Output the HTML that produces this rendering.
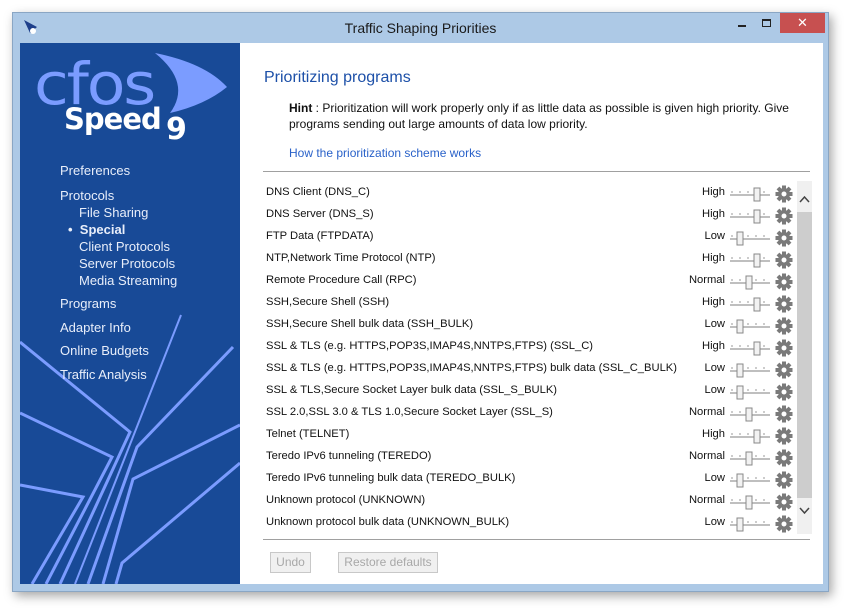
<!DOCTYPE html>
<html><head><meta charset="utf-8"><style>
body{margin:0;width:852px;height:612px;background:#fff;position:relative;overflow:hidden;font-family:"Liberation Sans",sans-serif;}
.win{position:absolute;left:12px;top:12px;width:817px;height:580px;background:#adc9e6;border:1px solid #8aa6c4;box-sizing:border-box;box-shadow:3px 4px 10px rgba(0,0,0,.35);}
.title{position:absolute;left:0;top:0;width:100%;text-align:center;top:7px;font-size:14px;color:#1a1a1a;}
.close{position:absolute;left:767px;top:0;width:45px;height:20px;background:#c75050;color:#fff;text-align:center;font-size:13px;line-height:20px;}
.side{position:absolute;left:20px;top:43px;width:220px;height:541px;background:#184a97;overflow:hidden;}
.main{position:absolute;left:240px;top:43px;width:583px;height:541px;background:#fff;}
.nav{position:absolute;color:#e8eefa;font-size:13px;}
.row{position:absolute;left:266px;font-size:11.2px;color:#111;}
.pr{position:absolute;font-size:11.2px;color:#111;text-align:right;width:60px;}
.btn{position:absolute;top:552px;height:19px;border:1px solid #c8c8c8;background:#f0f0f0;color:#a8a8a8;font-size:12px;line-height:19px;text-align:center;}
</style></head><body>
<div class="win">
<div class="title">Traffic Shaping Priorities</div>
<div style="position:absolute;left:725px;top:12px;width:8px;height:2px;background:#222"></div>
<div style="position:absolute;left:749px;top:6px;width:7px;height:5px;border:1.5px solid #222;border-top-width:2.5px"></div>
<div class="close">✕</div>
<svg style="position:absolute;left:10px;top:6px" width="16" height="16"><path d="M1 1 L14 8 L7 14 Z" fill="#1e3f8a"/><circle cx="10" cy="12" r="3" fill="#fff"/></svg>
</div>
<div class="side">
<svg width="220" height="541" style="position:absolute;left:0;top:0">
<g fill="none" stroke="#7b9cff" stroke-width="3">
<polyline points="0,442 63,454 12,541"/>
<polyline points="0,370 92,414 26,541"/>
<polyline points="0,299 110,389 40,541"/>
<polyline points="161,272 55,541" stroke-width="2"/>
<polyline points="213,304 117,404 68,541"/>
<polyline points="220,382 113,436 83,541"/>
<polyline points="220,420 102,520 96,541"/>
</g>
<path d="M135 10 Q185 20 207 44 Q185 62 150 70 Q172 40 135 10Z" fill="#7b9cff"/>
<text x="14" y="61" font-family="DejaVu Sans" font-size="58" fill="#7b9cff" letter-spacing="-2" textLength="120" lengthAdjust="spacingAndGlyphs">cfos</text>
<text x="44" y="86" font-family="DejaVu Sans" font-weight="bold" font-size="29" fill="#fff" letter-spacing="-1">Speed</text>
<text x="146" y="96" font-family="DejaVu Sans" font-weight="bold" font-size="30" fill="#fff">9</text>
</svg>
<div class="nav" style="left:40px;top:120px">Preferences</div>
<div class="nav" style="left:40px;top:145px">Protocols</div>
<div class="nav" style="left:59px;top:162px">File Sharing</div>
<div class="nav" style="left:48px;top:179px;font-weight:bold">•&nbsp; Special</div>
<div class="nav" style="left:59px;top:196px">Client Protocols</div>
<div class="nav" style="left:59px;top:213px">Server Protocols</div>
<div class="nav" style="left:59px;top:230px">Media Streaming</div>
<div class="nav" style="left:40px;top:253px">Programs</div>
<div class="nav" style="left:40px;top:277px">Adapter Info</div>
<div class="nav" style="left:40px;top:300px">Online Budgets</div>
<div class="nav" style="left:40px;top:324px">Traffic Analysis</div>
</div>
<div class="main"></div>
<div style="position:absolute;left:264px;top:69px;font-size:16px;color:#1d50a8">Prioritizing programs</div>
<div style="position:absolute;left:289px;top:100px;width:510px;font-size:12px;line-height:16px;color:#111"><b>Hint</b> : Prioritization will work properly only if as little data as possible is given high priority. Give programs sending out large amounts of data low priority.</div>
<div style="position:absolute;left:289px;top:146px;font-size:12px;color:#2a62c9">How the prioritization scheme works</div>
<div style="position:absolute;left:263px;top:171px;width:547px;height:1px;background:#a0a0a0"></div>
<div style="position:absolute;left:263px;top:539px;width:547px;height:1px;background:#a0a0a0"></div>
<div style="position:absolute;left:797px;top:181px;width:15px;height:353px;background:#f0f0f0"></div>
<div style="position:absolute;left:797px;top:212px;width:15px;height:286px;background:#cdcdcd"></div>
<svg style="position:absolute;left:797px;top:194px" width="15" height="12"><polyline points="3,8 7.5,3 12,8" fill="none" stroke="#444" stroke-width="1.5"/></svg>
<svg style="position:absolute;left:797px;top:505px" width="15" height="12"><polyline points="3,3 7.5,8 12,3" fill="none" stroke="#444" stroke-width="1.5"/></svg>
<div id="rows"></div>
<div class="btn" style="left:270px;width:39px">Undo</div>
<div class="btn" style="left:338px;width:98px">Restore defaults</div>
<script>
var d=[["DNS Client (DNS_C)","High"],["DNS Server (DNS_S)","High"],["FTP Data (FTPDATA)","Low"],["NTP,Network Time Protocol (NTP)","High"],["Remote Procedure Call (RPC)","Normal"],["SSH,Secure Shell (SSH)","High"],["SSH,Secure Shell bulk data (SSH_BULK)","Low"],["SSL & TLS (e.g. HTTPS,POP3S,IMAP4S,NNTPS,FTPS) (SSL_C)","High"],["SSL & TLS (e.g. HTTPS,POP3S,IMAP4S,NNTPS,FTPS) bulk data (SSL_C_BULK)","Low"],["SSL & TLS,Secure Socket Layer bulk data (SSL_S_BULK)","Low"],["SSL 2.0,SSL 3.0 & TLS 1.0,Secure Socket Layer (SSL_S)","Normal"],["Telnet (TELNET)","High"],["Teredo IPv6 tunneling (TEREDO)","Normal"],["Teredo IPv6 tunneling bulk data (TEREDO_BULK)","Low"],["Unknown protocol (UNKNOWN)","Normal"],["Unknown protocol bulk data (UNKNOWN_BULK)","Low"]];
var h="";
d.forEach(function(r,i){var y=186+i*22;var t=r[1]=="High"?28:r[1]=="Normal"?20:11;
h+='<div class="row" style="top:'+y+'px">'+r[0].replace(/&/g,"&amp;")+'</div>';
h+='<div class="pr" style="left:665px;top:'+y+'px">'+r[1]+'</div>';
h+='<svg style="position:absolute;left:729px;top:'+(y-2)+'px" width="66" height="20"><line x1="1" y1="11" x2="41" y2="11" stroke="#aaa" stroke-width="1.5"/><g stroke="#999"><line x1="3" y1="7" x2="3" y2="9"/><line x1="11" y1="7" x2="11" y2="9"/><line x1="19" y1="7" x2="19" y2="9"/><line x1="27" y1="7" x2="27" y2="9"/><line x1="35" y1="7" x2="35" y2="9"/></g><rect x="'+(t-3)+'" y="4" width="6" height="13" fill="#f2f2f2" stroke="#888"/><g transform="translate(55,10)" fill="#7a7a7a"><circle r="6"/><rect x="-2" y="-8.5" width="4" height="17"/><rect x="-2" y="-8.5" width="4" height="17" transform="rotate(45)"/><rect x="-2" y="-8.5" width="4" height="17" transform="rotate(90)"/><rect x="-2" y="-8.5" width="4" height="17" transform="rotate(135)"/><circle r="2.5" fill="#fff"/></g></svg>';});
document.getElementById("rows").innerHTML=h;
</script>
</body></html>
